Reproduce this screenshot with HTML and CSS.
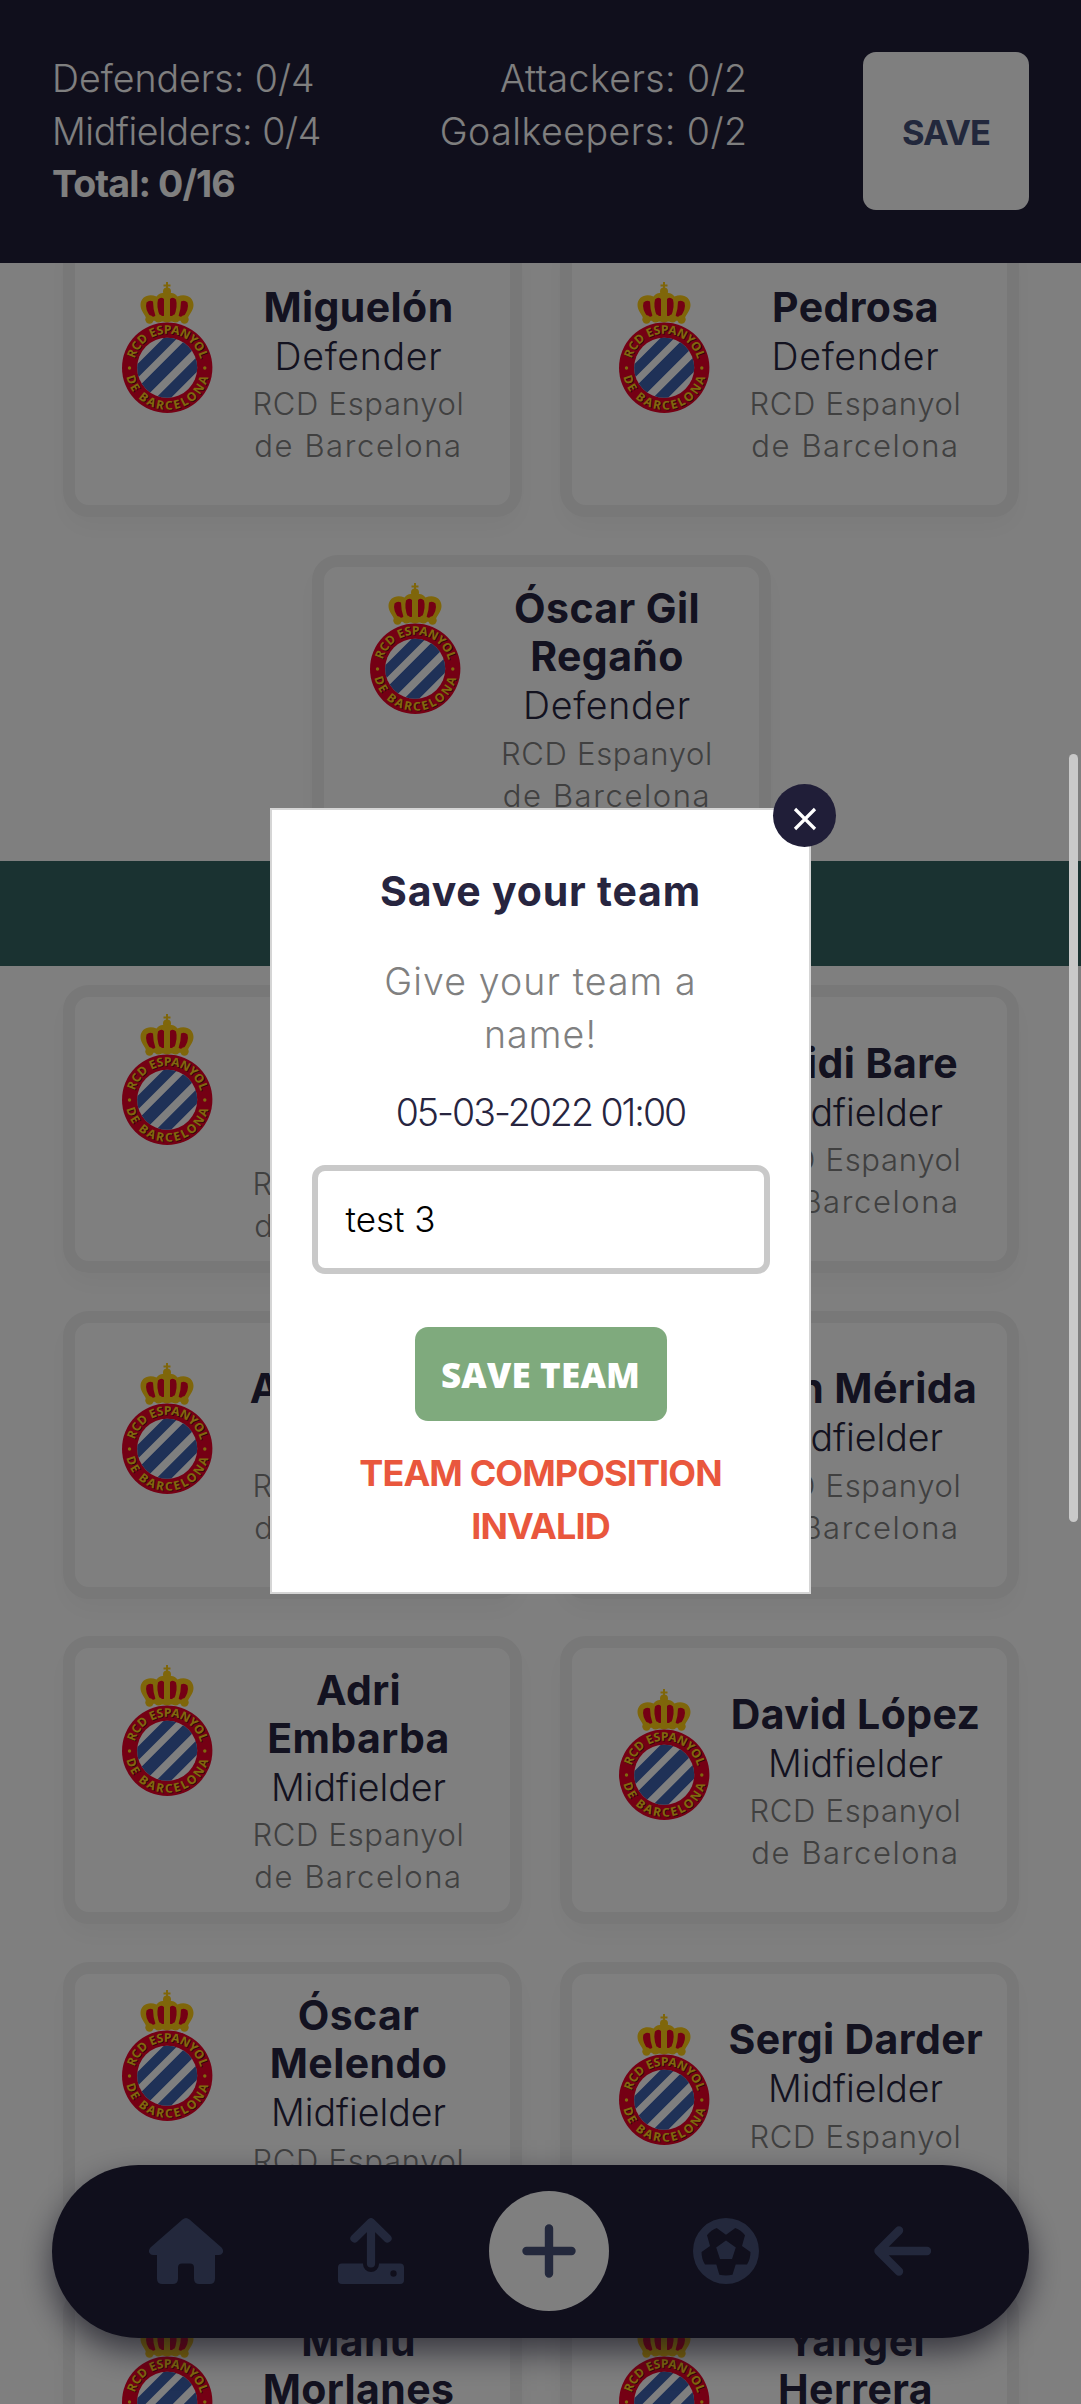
FILE: index.html
```html
<!DOCTYPE html>
<html lang="en">
<head>
<meta charset="utf-8">
<title>Save your team</title>
<link rel="stylesheet" href="styles.css">
</head>
<body>
<svg class="defs" aria-hidden="true">
  <defs>
    <clipPath id="inner"><circle cx="45.2" cy="85.7" r="30"/></clipPath>
    <path id="arc-top" d="M11.5 85.7A34 34 0 0 1 79.5 85.7"/>
    <path id="arc-bottom" d="M3.4 85.7A42 42 0 0 0 87.4 85.7"/>
    <g id="half-crown">
      <path d="M45 11C41 10.500 37 11 34.500 14.500C27 11 18.500 14.500 18.500 23C18.500 29 23 32 25 38L45 40Z" fill="#ffcc14"/>
      <path d="M24.500 20.500Q27.500 17.500 31 19.500Q31 27 33.500 34L29 35.500Q22.500 27 24.500 20.500ZM36 17.500Q39 14.500 42 17V34L38 34Q34 25 36 17.500Z" fill="#ea0028"/>
    </g>
    <symbol id="crest" viewBox="0 0 91 131">
      <path d="M44 0h2v2.500h2.500v2H46V8h-2V4.500h-2.500v-2H44Z" fill="#ffcc14"/>
      <circle cx="45" cy="9.500" r="4" fill="#ffcc14"/>
      <use href="#half-crown"/>
      <use href="#half-crown" transform="matrix(-1 0 0 1 90 0)"/>
      <g fill="#ffcc14"><circle cx="27.500" cy="37.500" r="4.200"/><circle cx="36.500" cy="36.500" r="4"/><circle cx="45" cy="36.500" r="4"/><circle cx="53.500" cy="36.500" r="4"/><circle cx="62.500" cy="37.500" r="4.200"/></g>
      <circle cx="45.200" cy="85.700" r="45.200" fill="#ea0028"/>
      <circle cx="45.200" cy="85.700" r="30" fill="#fff"/>
      <g clip-path="url(#inner)"><g transform="translate(45.200 85.700) rotate(45)" fill="#3e62ae"><path d="M-23.600-32h9.900v64h-9.900ZM-6.800-32H5.600v64H-6.800ZM13.400-32H24v64H13.400Z"/></g></g>
      <g class="crest-text crest-text-shade" transform="translate(.8 .8)">
        <text><textPath href="#arc-top" startOffset="9" textLength="89">RCD ESPANYOL</textPath></text>
        <text><textPath href="#arc-bottom" startOffset="9" textLength="113">DE BARCELONA</textPath></text>
      </g>
      <g class="crest-text">
        <text><textPath href="#arc-top" startOffset="9" textLength="89">RCD ESPANYOL</textPath></text>
        <text><textPath href="#arc-bottom" startOffset="9" textLength="113">DE BARCELONA</textPath></text>
        <circle cx="7.500" cy="86" r="1.700"/><circle cx="82.800" cy="86" r="1.700"/>
      </g>
    </symbol>
  </defs>
</svg>

<header class="summary">
  <div class="counts">
    <p class="defenders">Defenders: 0/4</p>
    <p class="midfielders">Midfielders: 0/4</p>
    <p class="total">Total: 0/16</p>
  </div>
  <div class="counts counts-right">
    <p class="attackers">Attackers: 0/2</p>
    <p class="goalkeepers">Goalkeepers: 0/2</p>
  </div>
  <button class="save">SAVE</button>
</header>

<main>
  <section class="players">
    <article class="card"><svg class="crest"><use href="#crest"/></svg><div class="info"><h3>Miguelón</h3><p class="position defender">Defender</p><p class="club">RCD Espanyol<br><span>de Barcelona</span></p></div></article>
    <article class="card"><svg class="crest"><use href="#crest"/></svg><div class="info"><h3>Pedrosa</h3><p class="position defender">Defender</p><p class="club">RCD Espanyol<br><span>de Barcelona</span></p></div></article>
    <article class="card"><svg class="crest"><use href="#crest"/></svg><div class="info"><h3>Óscar Gil<br>Regaño</h3><p class="position defender">Defender</p><p class="club">RCD Espanyol<br><span>de Barcelona</span></p></div></article>
  </section>
  <div class="band"></div>
  <section class="players">
    <article class="card"><svg class="crest"><use href="#crest"/></svg><div class="info"><h3>Tonny<br>Vilhena</h3><p class="position">Midfielder</p><p class="club">RCD Espanyol<br><span>de Barcelona</span></p></div></article>
    <article class="card"><svg class="crest"><use href="#crest"/></svg><div class="info"><h3>Keidi Bare</h3><p class="position">Midfielder</p><p class="club">RCD Espanyol<br><span>de Barcelona</span></p></div></article>
    <article class="card"><svg class="crest"><use href="#crest"/></svg><div class="info"><h3>Aleix Vidal</h3><p class="position">Midfielder</p><p class="club">RCD Espanyol<br><span>de Barcelona</span></p></div></article>
    <article class="card"><svg class="crest"><use href="#crest"/></svg><div class="info"><h3>Fran Mérida</h3><p class="position">Midfielder</p><p class="club">RCD Espanyol<br><span>de Barcelona</span></p></div></article>
    <article class="card"><svg class="crest"><use href="#crest"/></svg><div class="info"><h3>Adri<br>Embarba</h3><p class="position">Midfielder</p><p class="club">RCD Espanyol<br><span>de Barcelona</span></p></div></article>
    <article class="card"><svg class="crest"><use href="#crest"/></svg><div class="info"><h3>David López</h3><p class="position">Midfielder</p><p class="club">RCD Espanyol<br><span>de Barcelona</span></p></div></article>
    <article class="card"><svg class="crest"><use href="#crest"/></svg><div class="info"><h3>Óscar<br>Melendo</h3><p class="position">Midfielder</p><p class="club">RCD Espanyol<br><span>de Barcelona</span></p></div></article>
    <article class="card"><svg class="crest"><use href="#crest"/></svg><div class="info"><h3>Sergi Darder</h3><p class="position">Midfielder</p><p class="club">RCD Espanyol<br><span>de Barcelona</span></p></div></article>
    <article class="card"><svg class="crest"><use href="#crest"/></svg><div class="info"><h3>Manu<br>Morlanes</h3></div></article>
    <article class="card"><svg class="crest"><use href="#crest"/></svg><div class="info"><h3>Yangel<br>Herrera</h3></div></article>
  </section>
</main>

<nav class="tabs">
  <svg class="home" width="74" height="66" viewBox="0 0 74 66" fill="currentColor"><path d="M33.500 1.500Q37-1.500 40.500 1.500L72.500 29.500Q75 32.500 73.500 35Q72.500 37 70 37H66V60.500Q66 66 60.500 66H50.500Q45 66 45 60.500V49.500Q45 45.500 41 45.500H33Q29 45.500 29 49.500V60.500Q29 66 23.500 66H13.500Q8 66 8 60.500V37H4Q1.500 37 .5 35Q-1 32.500 1.500 29.500Z"/></svg>
  <svg width="66" height="66" viewBox="0 0 66 66" fill="currentColor"><path d="M4 45.500H25V46A8 8 0 0 0 41 46V45.500H62Q66 45.500 66 49.500V62Q66 66 62 66H4Q0 66 0 62V49.500Q0 45.500 4 45.500ZM55.500 52.300A3.200 3.200 0 1 0 55.500 58.700A3.200 3.200 0 1 0 55.500 52.300Z" fill-rule="evenodd"/><path d="M16.500 20.500L33 4.300L49.500 20.500M33 5V45.500" fill="none" stroke="currentColor" stroke-width="8.200" stroke-linecap="round" stroke-linejoin="round"/></svg>
  <span class="add"><svg width="54" height="54" viewBox="0 0 54 54" fill="none" stroke="currentColor" stroke-width="8.400" stroke-linecap="round"><path d="M27 4.500V49.500M4.500 27H49.500"/></svg></span>
  <svg width="66" height="66" viewBox="-33 -33 66 66" fill="currentColor"><path fill-rule="evenodd" d="M0-33A33 33 0 0 1 0 33A33 33 0 0 1 0-33ZM-9.300-23Q-15-21-19-15.700L-16-5L-24.500 1Q-24.500 8-21 13.500H-9.700L-6.700 23.700Q0 25.300 6.500 23.700L9.700 13.500H21Q24.500 8 24.500 1L16-5L19-15.700Q15-21 9.300-23L0-16.300ZM0-10.500L9.800-3.500L6 8H-6L-9.800-3.500Z"/></svg>
  <svg class="back" width="57" height="50" viewBox="0 0 57 50" fill="none" stroke="currentColor" stroke-width="8.400" stroke-linecap="round" stroke-linejoin="round"><path d="M25 4.500L4.500 25L25 45.500M6 25H53"/></svg>
</nav>

<div class="overlay">
  <div class="modal">
    <h2>Save your team</h2>
    <p class="prompt">Give your team a<br>name!</p>
    <p class="date">05-03-2022 01:00</p>
    <div class="field">test 3</div>
    <button class="submit">SAVE TEAM</button>
    <p class="error">TEAM COMPOSITION<br>INVALID</p>
    <span class="close"><svg width="24" height="24" viewBox="0 0 24 24" stroke="#fff" stroke-width="3.200"><path d="M2 2L22 22M22 2L2 22"/></svg></span>
  </div>
</div>
<div class="scrollbar"></div>
</body>
</html>
```
FILE: styles.css
```css
* { box-sizing: border-box; margin: 0; }
html { height: 2404px; overflow: hidden; }
body {
  height: 2404px;
  overflow: hidden;
  position: relative;
  background: #fff;
  color: #27253f;
  font: 300 37.5px Inter, sans-serif;
}
button { border: 0; padding: 0; }
.defs { position: absolute; width: 0; height: 0; }

.summary {
  position: relative;
  z-index: 1;
  height: 263px;
  padding: 52px;
  display: flex;
  justify-content: space-between;
  background: #201e38;
  color: #fff;
  line-height: 53px;
  white-space: nowrap;
}
.counts { width: 340px; }
.counts-right { text-align: right; margin-right: 100px; }
.midfielders { letter-spacing: -.4px; }
.total { margin-top: -1px; font-weight: 700; letter-spacing: -.9px; }
.attackers { letter-spacing: .4px; }
.goalkeepers { letter-spacing: .5px; }
.save {
  width: 166px;
  height: 158px;
  padding-top: 2px;
  border-radius: 13px;
  background: #fff;
  color: #455079;
  font: 700 34.5px Inter, sans-serif;
  letter-spacing: -.9px;
}

main { height: 2175px; margin-top: -34px; overflow: hidden; }
.players {
  display: flex;
  flex-wrap: wrap;
  justify-content: center;
  gap: 37.5px 38px;
  padding-left: 1px;
}
.card {
  width: 459px;
  height: 288px;
  display: flex;
  flex-wrap: wrap;
  align-content: center;
  align-items: flex-start;
  padding: 3px 0 0 46.5px;
  border: 12.5px solid #f0f0f0;
  border-radius: 26px;
  box-shadow: 0 12px 25px rgba(0, 0, 0, .035);
  white-space: nowrap;
}
.crest { width: 91px; height: 131px; }
.info { width: 254px; min-height: 185.5px; margin-left: 19px; padding-top: 1px; text-align: center; }
.card:has(h3 br) .info { min-height: 234px; }
h3 { font: 700 41px/48px Inter, sans-serif; letter-spacing: .4px; color: #262440; }
.position { line-height: 51px; }
.defender { letter-spacing: .7px; }
.club { margin-top: 1.5px; font-size: 31px; line-height: 42px; letter-spacing: .7px; color: #808080; }
.club span { letter-spacing: 1.6px; }
.band { height: 105px; margin: 18.5px 0 19px; background: #346462; }

.crest-text { font: 700 12px "Noto Sans", sans-serif; fill: #ffd21c; }
.crest-text-shade { fill: #5a1010; }

.tabs {
  position: absolute;
  left: 52px;
  right: 52px;
  top: 2165px;
  height: 172.5px;
  padding: 0 98px 1px 97px;
  display: flex;
  align-items: center;
  justify-content: space-between;
  border-radius: 87px;
  background: #201e38;
  box-shadow: 0 14px 32px rgba(32, 30, 56, .65);
  color: #465179;
}
.home { margin-right: 30px; }
.back { margin-left: 30px; }
.add {
  width: 120px;
  height: 120px;
  display: grid;
  place-items: center;
  border-radius: 50%;
  background: #fff;
}

.overlay {
  position: absolute;
  inset: 0;
  z-index: 2;
  display: flex;
  align-items: center;
  justify-content: center;
  padding-bottom: 2px;
  background: rgba(0, 0, 0, .5);
}
.modal {
  position: relative;
  width: 541px;
  height: 786px;
  padding: 55px 40px 0;
  display: flex;
  flex-direction: column;
  align-items: center;
  border: 2px solid #d5d5d5;
  background: #fff;
  text-align: center;
  white-space: nowrap;
}
h2 { font: 700 41px/52px Inter, sans-serif; letter-spacing: .8px; }
.prompt { margin-top: 39px; line-height: 52.5px; letter-spacing: 1.1px; color: #808080; }
.date { margin-top: 26px; line-height: 52px; letter-spacing: -2px; }
.field {
  width: 458px;
  height: 109px;
  margin-top: 26px;
  padding-left: 28px;
  border: 6px solid #c9c9c9;
  border-radius: 13px;
  color: #000;
  font-size: 35px;
  line-height: 97px;
  text-align: left;
}
.submit {
  width: 252px;
  height: 94px;
  margin-top: 53px;
  padding-top: 1px;
  border-radius: 13px;
  background: #7faa7d;
  color: #fff;
  font: 800 35px "Open Sans", sans-serif;
  letter-spacing: .2px;
}
.error { margin-top: 26px; color: #e9573d; font-weight: 700; font-size: 36px; line-height: 53px; letter-spacing: -.9px; }
.close {
  position: absolute;
  top: -26px;
  right: -27px;
  width: 63px;
  height: 63px;
  display: grid;
  place-items: center;
  padding-top: 6px;
  border-radius: 50%;
  background: #201e38;
}
.scrollbar {
  position: absolute;
  z-index: 3;
  right: 3px;
  top: 754px;
  width: 9px;
  height: 768px;
  border-radius: 5px;
  background: #c9c9c9;
}
```
